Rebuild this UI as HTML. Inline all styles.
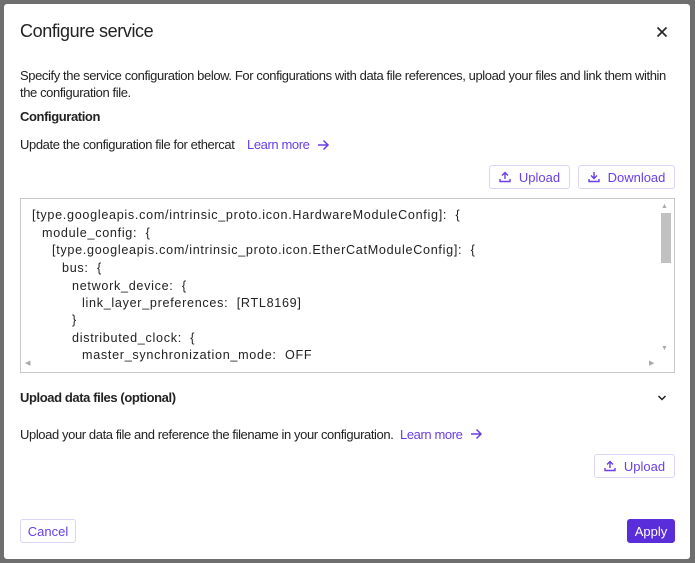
<!DOCTYPE html>
<html><head><style>
body{margin:0;width:695px;height:563px;background:#6f6f6f;font-family:"Liberation Sans",sans-serif;overflow:hidden;position:relative}
.dlg{position:absolute;left:4px;top:4px;width:686px;height:555px;background:#fff;border-radius:3px}
.a{position:absolute;white-space:nowrap;color:#222}
.t{font-size:13px;letter-spacing:-0.4px}
.lk{color:#6a3ee8}
.btn{position:absolute;border:1px solid #ddd4f7;border-radius:3px;color:#6a3ee8;font-size:13px;box-sizing:border-box;display:flex;align-items:center;justify-content:center;gap:8px;background:#fff}
.code{position:absolute;left:20px;top:198px;width:655px;height:175px;border:1px solid #c9c9c9;box-sizing:border-box;overflow:hidden}
.code div{position:absolute;font-size:12.6px;white-space:pre;color:#222;letter-spacing:0.7px}
</style></head><body>
<div class="dlg"></div>
<div class="a" style="left:20px;top:21px;font-size:18px;letter-spacing:-0.4px">Configure service</div>
<svg class="a" style="left:656px;top:26px" width="12" height="12" viewBox="0 0 12 12"><path d="M1.5 1.5L10.5 10.5M10.5 1.5L1.5 10.5" stroke="#222" stroke-width="1.6"/></svg>
<div class="a t" style="left:20px;top:68px">Specify the service configuration below. For configurations with data file references, upload your files and link them within</div>
<div class="a t" style="left:20px;top:85px">the configuration file.</div>
<div class="a t" style="left:20px;top:109px;font-weight:bold">Configuration</div>
<div class="a t" style="left:20px;top:137px">Update the configuration file for ethercat</div>
<div class="a t lk" style="left:247px;top:137px">Learn more</div>
<svg class="a" style="left:317px;top:139px" width="13" height="12" viewBox="0 0 13 12"><path d="M1 6H11M6.5 1.5L11 6L6.5 10.5" stroke="#6a3ee8" stroke-width="1.5" fill="none"/></svg>
<div class="btn" style="left:489px;top:165px;width:81px;height:24px"><svg width="12" height="12" viewBox="0 0 12 12"><path d="M6 8V1.5M3 4.5L6 1.5L9 4.5M1 8V10.5H11V8" stroke="#6a3ee8" stroke-width="1.4" fill="none"/></svg>Upload</div>
<div class="btn" style="left:578px;top:165px;width:97px;height:24px"><svg width="12" height="12" viewBox="0 0 12 12"><path d="M6 1V7.5M3 4.5L6 7.5L9 4.5M1 8V10.5H11V8" stroke="#6a3ee8" stroke-width="1.4" fill="none"/></svg>Download</div>
<div class="code">
<div style="left:11px;top:9px">[type.googleapis.com/intrinsic_proto.icon.HardwareModuleConfig]:  {</div>
<div style="left:21px;top:27px">module_config:  {</div>
<div style="left:31px;top:44px">[type.googleapis.com/intrinsic_proto.icon.EtherCatModuleConfig]:  {</div>
<div style="left:41px;top:62px">bus:  {</div>
<div style="left:51px;top:80px">network_device:  {</div>
<div style="left:61px;top:97px">link_layer_preferences:  [RTL8169]</div>
<div style="left:51px;top:114px">}</div>
<div style="left:51px;top:132px">distributed_clock:  {</div>
<div style="left:61px;top:149px">master_synchronization_mode:  OFF</div>
<div style="left:640px;top:14px;width:10px;height:50px;background:#c1c1c1"></div>
<div style="left:640px;top:4px;font-size:7px;color:#aaa">▲</div>
<div style="left:640px;top:146px;font-size:7px;color:#aaa">▼</div>
<div style="left:4px;top:160px;font-size:7px;color:#aaa">◀</div>
<div style="left:628px;top:160px;font-size:7px;color:#aaa">▶</div>
</div>
<div class="a t" style="left:20px;top:390px;font-weight:bold">Upload data files (optional)</div>
<svg class="a" style="left:657px;top:394px" width="10" height="8" viewBox="0 0 10 8"><path d="M1.5 2L5 5.5L8.5 2" stroke="#222" stroke-width="1.5" fill="none"/></svg>
<div class="a t" style="left:20px;top:427px">Upload your data file and reference the filename in your configuration.</div>
<div class="a t lk" style="left:400px;top:427px">Learn more</div>
<svg class="a" style="left:470px;top:428px" width="13" height="12" viewBox="0 0 13 12"><path d="M1 6H11M6.5 1.5L11 6L6.5 10.5" stroke="#6a3ee8" stroke-width="1.5" fill="none"/></svg>
<div class="btn" style="left:594px;top:454px;width:81px;height:24px"><svg width="12" height="12" viewBox="0 0 12 12"><path d="M6 8V1.5M3 4.5L6 1.5L9 4.5M1 8V10.5H11V8" stroke="#6a3ee8" stroke-width="1.4" fill="none"/></svg>Upload</div>
<div class="btn" style="left:20px;top:519px;width:56px;height:24px">Cancel</div>
<div class="btn" style="left:627px;top:519px;width:48px;height:24px;background:#5a2ddb;border-color:#5a2ddb;color:#fff">Apply</div>
</body></html>
